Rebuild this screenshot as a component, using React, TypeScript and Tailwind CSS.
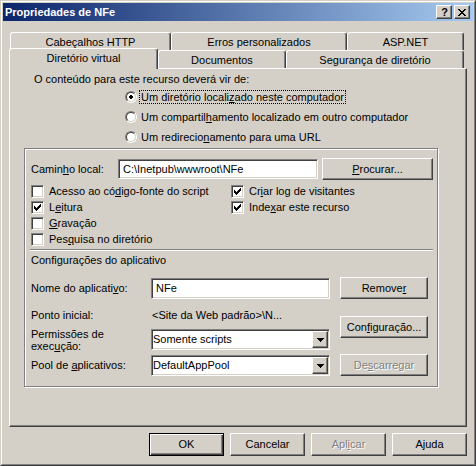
import React from "react";

const RAISED =
  "bg-[#D4D0C8] border border-t-white border-l-white border-r-[#404040] border-b-[#404040] shadow-[inset_-1px_-1px_0_#808080]";
const SUNKEN =
  "bg-white border border-t-[#808080] border-l-[#808080] border-r-white border-b-white shadow-[inset_1px_1px_0_#404040,inset_-1px_-1px_0_#D4D0C8]";

function U({ children }: { children: React.ReactNode }) {
  return <span className="underline underline-offset-[1px] decoration-1">{children}</span>;
}

function Btn({
  children,
  className = "",
  def = false,
  disabled = false,
}: {
  children: React.ReactNode;
  className?: string;
  def?: boolean;
  disabled?: boolean;
}) {
  const frame = def
    ? "bg-[#D4D0C8] border border-black shadow-[inset_1px_1px_0_#fff,inset_-1px_-1px_0_#404040,inset_-2px_-2px_0_#808080]"
    : RAISED;
  return (
    <div className={`${frame} flex items-center justify-center shrink-0 ${className}`}>
      <span
        className={
          disabled ? "text-[#808080] [text-shadow:1px_1px_0_#fff]" : "text-black"
        }
      >
        {children}
      </span>
    </div>
  );
}

function CheckMark() {
  const px: [number, number][] = [
    [6, 0],
    [5, 1],
    [6, 1],
    [0, 2],
    [4, 2],
    [5, 2],
    [6, 2],
    [0, 3],
    [1, 3],
    [3, 3],
    [4, 3],
    [5, 3],
    [0, 4],
    [1, 4],
    [2, 4],
    [3, 4],
    [4, 4],
    [1, 5],
    [2, 5],
    [3, 5],
    [2, 6],
  ];
  return (
    <svg
      className="absolute left-[2px] top-[2px]"
      width="7"
      height="7"
      viewBox="0 0 7 7"
      shapeRendering="crispEdges"
    >
      {px.map(([x, y], i) => (
        <rect key={i} x={x} y={y} width="1" height="1" fill="#000" />
      ))}
    </svg>
  );
}

function Checkbox({ checked = false }: { checked?: boolean }) {
  return (
    <div className={`${SUNKEN} relative w-[13px] h-[13px] shrink-0`}>
      {checked && <CheckMark />}
    </div>
  );
}

function Radio({ checked = false }: { checked?: boolean }) {
  return (
    <div className="w-[12px] h-[12px] shrink-0 rounded-full border border-t-[#808080] border-l-[#808080] border-r-white border-b-white">
      <div className="w-full h-full rounded-full bg-white border border-t-[#404040] border-l-[#404040] border-r-[#D4D0C8] border-b-[#D4D0C8] flex items-center justify-center">
        {checked && (
          <svg width="4" height="4" viewBox="0 0 4 4" shapeRendering="crispEdges">
            <rect x="1" y="0" width="2" height="4" fill="#000" />
            <rect x="0" y="1" width="4" height="2" fill="#000" />
          </svg>
        )}
      </div>
    </div>
  );
}

function Arrow() {
  return (
    <svg width="7" height="4" viewBox="0 0 7 4" shapeRendering="crispEdges">
      <rect x="0" y="0" width="7" height="1" fill="#000" />
      <rect x="1" y="1" width="5" height="1" fill="#000" />
      <rect x="2" y="2" width="3" height="1" fill="#000" />
      <rect x="3" y="3" width="1" height="1" fill="#000" />
    </svg>
  );
}

function Select({ value }: { value: string }) {
  return (
    <div className={`${SUNKEN} w-[179px] h-[21px] flex items-center shrink-0`}>
      <span className="flex-1 pl-[1px] whitespace-nowrap">{value}</span>
      <div className={`${RAISED} w-[16px] h-[17px] mr-[1px] flex items-center justify-center`}>
        <Arrow />
      </div>
    </div>
  );
}

function CloseGlyph() {
  const rows = [
    [0, 1, 6, 7],
    [1, 2, 5, 6],
    [2, 3, 4, 5],
    [3, 4],
    [2, 3, 4, 5],
    [1, 2, 5, 6],
    [0, 1, 6, 7],
  ];
  return (
    <svg width="8" height="7" viewBox="0 0 8 7" shapeRendering="crispEdges">
      {rows.flatMap((r, y) =>
        r.map((x) => <rect key={`${x}-${y}`} x={x} y={y} width="1" height="1" fill="#000" />)
      )}
    </svg>
  );
}

export default function App() {
  return (
    <div className="w-[476px] h-[466px] bg-[#D4D0C8] border border-t-[#D4D0C8] border-l-[#D4D0C8] border-r-[#404040] border-b-[#404040] font-['Liberation_Sans',Arial,sans-serif] text-[11px] leading-[13px] text-black select-none">
      <div className="h-full border border-t-white border-l-white border-r-[#808080] border-b-[#808080] p-px flex flex-col">
        {/* Title bar */}
        <div className="h-[18px] shrink-0 flex items-center bg-[linear-gradient(to_right,#0A246A,#A6CAF0)] pl-[2px] pr-[3px]">
          <span className="flex-1 text-white font-bold text-[11px] whitespace-nowrap">
            Propriedades de NFe
          </span>
          <div className={`${RAISED} w-[16px] h-[14px] flex items-center justify-center`}>
            <span className="font-bold text-[11px] leading-[11px] text-black pl-[1px]">?</span>
          </div>
          <div className={`${RAISED} w-[16px] h-[14px] ml-[2px] flex items-center justify-center`}>
            <CloseGlyph />
          </div>
        </div>

        {/* Tabs row 1 */}
        <div className="mt-[11px] h-[18px] flex ml-[7px] shrink-0">
          <div className="w-[161px] h-[18px] pt-[3px] text-center border-t border-l border-t-white border-l-white border-r border-r-[#404040] shadow-[inset_-1px_0_0_#808080] rounded-t-[3px]">
            Cabeçalhos HTTP
          </div>
          <div className="w-[176px] h-[18px] pt-[3px] text-center border-t border-l border-t-white border-l-white border-r border-r-[#404040] shadow-[inset_-1px_0_0_#808080] rounded-t-[3px]">
            Erros personalizados
          </div>
          <div className="w-[117px] h-[18px] pt-[3px] text-center border-t border-l border-t-white border-l-white border-r border-r-[#404040] shadow-[inset_-1px_0_0_#808080] rounded-t-[3px]">
            ASP.NET
          </div>
        </div>

        {/* Tabs row 2 */}
        <div className="h-[18px] flex ml-[6px] shrink-0 relative z-10">
          <div className="w-[149px] h-[21px] mt-[-2px] pt-[3px] text-center bg-[#D4D0C8] border-t border-l border-t-white border-l-white border-r border-r-[#404040] shadow-[inset_-1px_0_0_#808080] rounded-t-[3px]">
            Diretório virtual
          </div>
          <div className="w-[128px] h-[18px] pt-[3px] text-center border-t border-l border-t-white border-l-white border-r border-r-[#404040] shadow-[inset_-1px_0_0_#808080] rounded-t-[3px]">
            Documentos
          </div>
          <div className="w-[178px] h-[18px] pt-[3px] text-center border-t border-l border-t-white border-l-white border-r border-r-[#404040] shadow-[inset_-1px_0_0_#808080] rounded-t-[3px]">
            Segurança de diretório
          </div>
        </div>

        {/* Panel */}
        <div className="ml-[6px] w-[458px] h-[359px] shrink-0 border border-t-white border-l-white border-r-[#404040] border-b-[#404040] shadow-[inset_-1px_-1px_0_#808080] flex flex-col">
          <div className="mt-[4px] h-[13px] pl-[24px] whitespace-nowrap">
            O conteúdo para este recurso deverá vir de:
          </div>
          <div className="mt-[1px] ml-[115px] flex flex-col">
            <div className="h-[20px] flex items-center">
              <Radio checked />
              <span className="ml-[2px] border border-dotted border-black px-[1px] leading-[12px] whitespace-nowrap">
                Um diretório locali<U>z</U>ado neste computador
              </span>
            </div>
            <div className="h-[20px] flex items-center">
              <Radio />
              <span className="ml-[4px] whitespace-nowrap">
                Um compartil<U>h</U>amento localizado em outro computador
              </span>
            </div>
            <div className="h-[20px] flex items-center">
              <Radio />
              <span className="ml-[4px] whitespace-nowrap">
                Um redirecio<U>n</U>amento para uma URL
              </span>
            </div>
          </div>

          {/* Group box */}
          <div className="mt-[1px] ml-[14px] w-[414px] h-[239px] border border-[#808080] shadow-[inset_1px_1px_0_#fff,1px_1px_0_#fff] flex flex-col">
            <div className="mt-[9px] h-[22px] flex items-center pl-[6px]">
              <span className="w-[87px] whitespace-nowrap">
                Camin<U>h</U>o local:
              </span>
              <div className={`${SUNKEN} w-[200px] h-[20px] flex items-center pl-[4px] whitespace-nowrap`}>
                C:\Inetpub\wwwroot\NFe
              </div>
              <Btn className="ml-[4px] w-[111px] h-[22px]">
                <U>P</U>rocurar...
              </Btn>
            </div>

            <div className="mt-[3px] pl-[6px] grid grid-cols-[200px_1fr]">
              <div className="h-[16px] flex items-center">
                <Checkbox />
                <span className="ml-[5px] whitespace-nowrap">
                  Acesso ao có<U>d</U>igo-fonte do script
                </span>
              </div>
              <div className="h-[16px] flex items-center">
                <Checkbox checked />
                <span className="ml-[5px] whitespace-nowrap">
                  Cr<U>i</U>ar log de visitantes
                </span>
              </div>
              <div className="h-[16px] flex items-center">
                <Checkbox checked />
                <span className="ml-[5px] whitespace-nowrap">
                  L<U>e</U>itura
                </span>
              </div>
              <div className="h-[16px] flex items-center">
                <Checkbox checked />
                <span className="ml-[5px] whitespace-nowrap">
                  Inde<U>x</U>ar este recurso
                </span>
              </div>
              <div className="h-[16px] flex items-center">
                <Checkbox />
                <span className="ml-[5px] whitespace-nowrap">
                  <U>G</U>ravação
                </span>
              </div>
              <div />
              <div className="h-[16px] flex items-center">
                <Checkbox />
                <span className="ml-[5px] whitespace-nowrap">
                  Pes<U>q</U>uisa no diretório
                </span>
              </div>
              <div />
            </div>

            <div className="mt-[2px] ml-[5px] w-[403px] h-[2px] border-t border-t-[#808080] border-b border-b-white" />

            <div className="mt-[3px] h-[13px] pl-[6px] whitespace-nowrap">
              Configurações do aplicativo
            </div>

            <div className="mt-[10px] pl-[6px] flex">
              <div className="flex flex-col w-[299px]">
                <div className="h-[22px] flex items-center">
                  <span className="w-[120px] whitespace-nowrap">
                    Nome do aplicati<U>v</U>o:
                  </span>
                  <div className={`${SUNKEN} w-[179px] h-[21px] flex items-center pl-[4px]`}>NFe</div>
                </div>
                <div className="mt-[10px] h-[13px] flex items-center">
                  <span className="w-[121px] whitespace-nowrap">Ponto inicial:</span>
                  <span className="whitespace-nowrap">&lt;Site da Web padrão&gt;\N...</span>
                </div>
                <div className="mt-[6px] h-[24px] flex items-start">
                  <span className="w-[120px] leading-[12px]">
                    Permissões de
                    <br />
                    exec<U>u</U>ção:
                  </span>
                  <div className="mt-[1px]">
                    <Select value="Somente scripts" />
                  </div>
                </div>
                <div className="mt-[2px] h-[22px] flex items-center">
                  <span className="w-[120px] whitespace-nowrap">
                    Pool de <U>a</U>plicativos:
                  </span>
                  <div className="mt-[1px]">
                    <Select value="DefaultAppPool" />
                  </div>
                </div>
              </div>
              <div className="ml-[10px] flex flex-col">
                <Btn className="w-[88px] h-[22px]">
                  Remove<U>r</U>
                </Btn>
                <Btn className="mt-[17px] w-[88px] h-[22px]">
                  Con<U>f</U>iguração...
                </Btn>
                <Btn className="mt-[16px] w-[88px] h-[22px]" disabled>
                  De<U>s</U>carregar
                </Btn>
              </div>
            </div>
          </div>
        </div>

        {/* Bottom buttons */}
        <div className="mt-[6px] flex justify-end gap-[6px] mr-[6px] shrink-0">
          <Btn def className="w-[75px] h-[23px]">
            OK
          </Btn>
          <Btn className="w-[75px] h-[23px]">Cancelar</Btn>
          <Btn disabled className="w-[75px] h-[23px]">
            Apl<U>i</U>car
          </Btn>
          <Btn className="w-[75px] h-[23px]">Ajuda</Btn>
        </div>
      </div>
    </div>
  );
}
